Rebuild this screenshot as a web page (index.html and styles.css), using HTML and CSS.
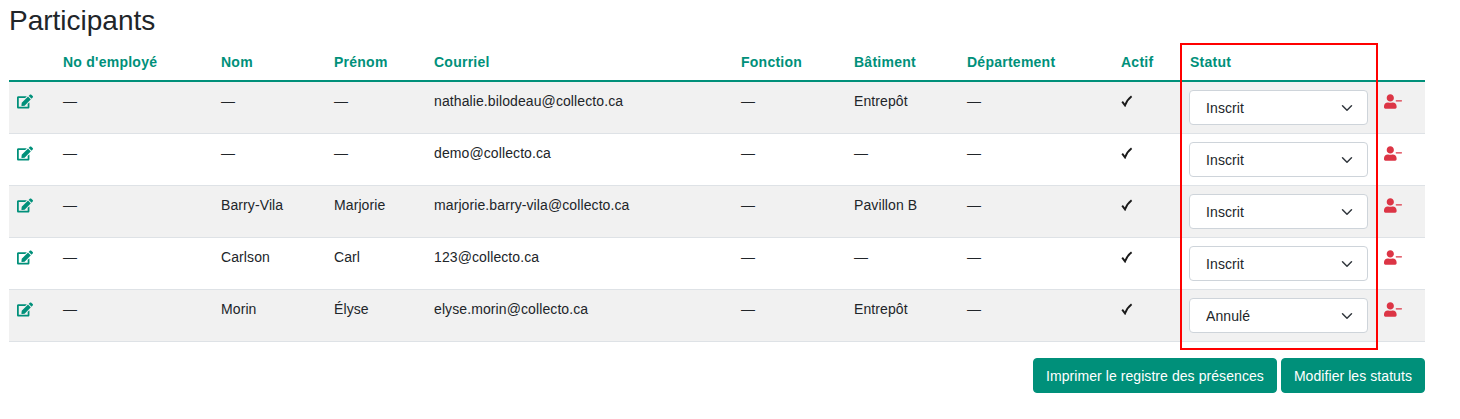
FILE: index.html
```html
<!DOCTYPE html>
<html lang="fr">
<head>
<meta charset="utf-8">
<title>Participants</title>
<link rel="stylesheet" href="styles.css">
</head>
<body>
<svg class="defs" width="0" height="0" aria-hidden="true">
  <symbol id="edit" viewBox="0 0 576 512">
    <path d="M402.6 83.2l90.2 90.2c3.8 3.8 3.8 10 0 13.8L274.4 405.6l-92.8 10.3c-12.4 1.4-22.9-9.1-21.5-21.5l10.3-92.8L388.8 83.2c3.8-3.8 10-3.8 13.8 0zm162-22.9l-48.8-48.8c-15.2-15.2-39.9-15.2-55.2 0l-35.4 35.4c-3.8 3.8-3.8 10 0 13.8l90.2 90.2c3.8 3.8 10 3.8 13.8 0l35.4-35.4c15.2-15.3 15.2-40 0-55.2zM384 346.2V448H64V128h229.8c3.2 0 6.2-1.3 8.500-3.500l40-40c7.600-7.600 2.200-20.500-8.500-20.500H48C21.500 64 0 85.500 0 112v352c0 26.500 21.500 48 48 48h352c26.500 0 48-21.500 48-48V306.200c0-10.700-12.900-16-20.500-8.500l-40 40c-2.200 2.300-3.500 5.300-3.500 8.500z"/>
  </symbol>
  <symbol id="user-minus" viewBox="0 0 640 512">
    <path d="M624 208H432c-8.800 0-16 7.200-16 16v16c0 8.800 7.200 16 16 16h192c8.800 0 16-7.200 16-16v-16c0-8.800-7.200-16-16-16zm-400 48c70.700 0 128-57.300 128-128S294.700 0 224 0 96 57.300 96 128s57.300 128 128 128zm89.600 32h-16.700c-22.200 10.200-46.900 16-72.900 16s-50.600-5.800-72.900-16h-16.700C60.200 288 0 348.200 0 422.400V464c0 26.500 21.500 48 48 48h352c26.500 0 48-21.500 48-48v-41.600c0-74.200-60.200-134.400-134.400-134.400z"/>
  </symbol>
  <symbol id="check" viewBox="0 0 12 12">
    <path d="M1.200 6.600 4 10.400C5.300 6.900 7.300 3.700 10.600 1.200" fill="none" stroke="currentColor" stroke-width="1.900"/>
  </symbol>
</svg>
<main class="page">
  <h1 class="title">Participants</h1>
  <table class="grid">
    <colgroup>
      <col class="c-edit"><col class="c-emp"><col class="c-nom"><col class="c-prenom"><col class="c-mail"><col class="c-fn"><col class="c-bat"><col class="c-dep"><col class="c-act"><col class="c-stat"><col class="c-rm">
    </colgroup>
    <thead>
      <tr><th></th><th>No d'employé</th><th>Nom</th><th>Prénom</th><th>Courriel</th><th>Fonction</th><th>Bâtiment</th><th>Département</th><th>Actif</th><th class="th-status">Statut</th><th></th></tr>
    </thead>
    <tbody>
      <tr>
        <td><svg class="ico-edit"><use href="#edit"/></svg></td><td>—</td><td>—</td><td>—</td><td>nathalie.bilodeau@collecto.ca</td><td>—</td><td>Entrepôt</td><td>—</td><td><svg class="ico-check"><use href="#check"/></svg></td>
        <td class="status"><select class="sel"><option>Inscrit</option><option>Annulé</option></select></td>
        <td><svg class="ico-rm"><use href="#user-minus"/></svg></td>
      </tr>
      <tr>
        <td><svg class="ico-edit"><use href="#edit"/></svg></td><td>—</td><td>—</td><td>—</td><td>demo@collecto.ca</td><td>—</td><td>—</td><td>—</td><td><svg class="ico-check"><use href="#check"/></svg></td>
        <td class="status"><select class="sel"><option>Inscrit</option><option>Annulé</option></select></td>
        <td><svg class="ico-rm"><use href="#user-minus"/></svg></td>
      </tr>
      <tr>
        <td><svg class="ico-edit"><use href="#edit"/></svg></td><td>—</td><td>Barry-Vila</td><td>Marjorie</td><td>marjorie.barry-vila@collecto.ca</td><td>—</td><td>Pavillon B</td><td>—</td><td><svg class="ico-check"><use href="#check"/></svg></td>
        <td class="status"><select class="sel"><option>Inscrit</option><option>Annulé</option></select></td>
        <td><svg class="ico-rm"><use href="#user-minus"/></svg></td>
      </tr>
      <tr>
        <td><svg class="ico-edit"><use href="#edit"/></svg></td><td>—</td><td>Carlson</td><td>Carl</td><td>123@collecto.ca</td><td>—</td><td>—</td><td>—</td><td><svg class="ico-check"><use href="#check"/></svg></td>
        <td class="status"><select class="sel"><option>Inscrit</option><option>Annulé</option></select></td>
        <td><svg class="ico-rm"><use href="#user-minus"/></svg></td>
      </tr>
      <tr>
        <td><svg class="ico-edit"><use href="#edit"/></svg></td><td>—</td><td>Morin</td><td>Élyse</td><td>elyse.morin@collecto.ca</td><td>—</td><td>Entrepôt</td><td>—</td><td><svg class="ico-check"><use href="#check"/></svg></td>
        <td class="status"><select class="sel"><option>Annulé</option><option>Inscrit</option></select></td>
        <td><svg class="ico-rm"><use href="#user-minus"/></svg></td>
      </tr>
    </tbody>
  </table>
  <div class="actions">
    <button class="btn" type="button">Imprimer le registre des présences</button>
    <button class="btn" type="button">Modifier les statuts</button>
  </div>
  <div class="highlight"></div>
</main>
</body>
</html>
```

FILE: styles.css
```css
* { box-sizing: border-box; }
html, body { margin: 0; padding: 0; background: #fff; }
body {
  font-family: "Liberation Sans", Arial, sans-serif;
  font-size: 14px;
  line-height: 21px;
  letter-spacing: 0.1px;
  color: #212529;
  overflow: hidden;
}
.defs { position: absolute; }
.page { position: relative; width: 1416px; margin-left: 9px; padding-top: 4px; }
.title { margin: 0 0 5px; font-size: 28px; font-weight: 400; line-height: 34px; letter-spacing: 0; }
.grid { width: 1416px; table-layout: fixed; border-collapse: collapse; }
.c-edit { width: 46px; }
.c-emp { width: 158px; }
.c-nom { width: 113px; }
.c-prenom { width: 100px; }
.c-mail { width: 307px; }
.c-fn { width: 113px; }
.c-bat { width: 113px; }
.c-dep { width: 154px; }
.c-act { width: 68px; }
.c-stat { width: 195px; }
.c-rm { width: 49px; }
.grid th {
  height: 38px;
  padding: 8px 8px 7px;
  text-align: left;
  vertical-align: middle;
  color: #00907a;
  font-weight: 700;
  border-bottom: 2px solid #00907a;
  letter-spacing: 0.25px;
}
.grid .th-status { padding-left: 9px; }
.grid td {
  height: 52px;
  padding: 9px 8px 7px;
  vertical-align: top;
  border-bottom: 1px solid #dee2e6;
}
.grid .status { padding-top: 8px; padding-bottom: 8px; }
.grid tbody tr:nth-child(odd) td { background: #f1f1f1; }
.sel {
  display: block;
  width: 179px;
  height: 35px;
  padding: 0 36px 0 16px;
  font: 14px "Liberation Sans", Arial, sans-serif;
  letter-spacing: 0.1px;
  color: #212529;
  background: #fff url("data:image/svg+xml,%3csvg xmlns='http://www.w3.org/2000/svg' viewBox='0 0 16 16'%3e%3cpath fill='none' stroke='%23343a40' stroke-linecap='round' stroke-linejoin='round' stroke-width='2' d='m2 5 6 6 6-6'/%3e%3c/svg%3e") no-repeat right 14px center / 12px 12px;
  border: 1px solid #ced4da;
  border-radius: 4px;
  appearance: none;
}
.ico-edit { display: block; width: 16px; height: 15px; fill: #00907a; margin-top: 3px; }
.ico-check { display: block; width: 12px; height: 12px; color: #1a1a1a; margin-top: 4px; }
.ico-rm { display: block; width: 18px; height: 15px; fill: #dc3545; margin-top: 3px; }
.actions { display: flex; justify-content: flex-end; gap: 4px; margin-top: 16px; }
.btn {
  height: 35px;
  padding: 0 12px;
  font: 14px "Liberation Sans", Arial, sans-serif;
  letter-spacing: 0.07px;
  color: #fff;
  background: #00907a;
  border: 1px solid #00907a;
  border-radius: 4px;
}
.highlight {
  position: absolute;
  left: 1171px;
  top: 43px;
  width: 198px;
  height: 307px;
  border: 2px solid #f00;
  pointer-events: none;
}
```
